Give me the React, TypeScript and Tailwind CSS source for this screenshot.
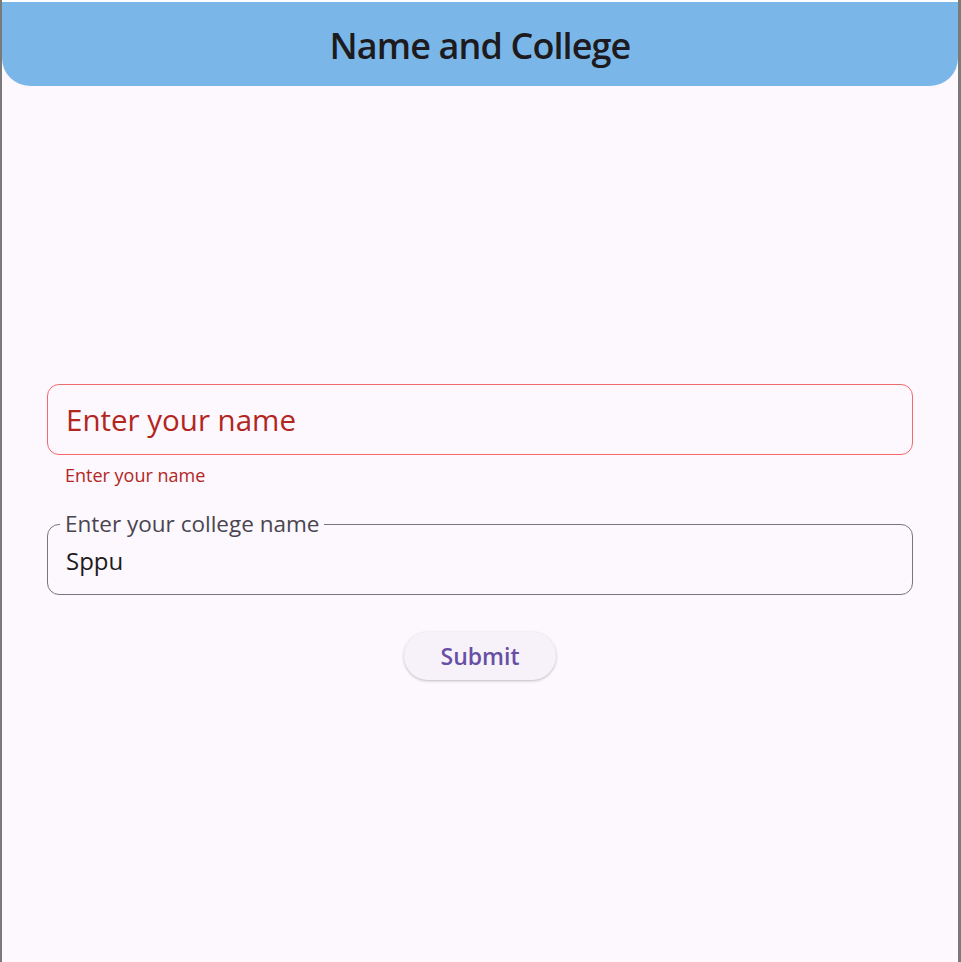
import React from "react";

const font = { fontFamily: '"Open Sans", "Noto Sans", sans-serif' };

export default function App() {
  return (
    <div
      className="w-[961px] h-[962px] bg-white pt-[2px] border-l-2 border-r-[3px] border-[#7a7a7a] overflow-hidden"
      style={font}
    >
      <div className="h-full flex flex-col bg-[#fdf7fe]">
        {/* App bar */}
        <header className="h-[84px] shrink-0 bg-[#7ab7e8] rounded-b-[28px] flex items-center justify-center pt-[3px]">
          <h1 className="text-[36px] leading-[44px] text-[#1d1b20] font-semibold tracking-tight">
            Name and College
          </h1>
        </header>

        {/* Form */}
        <div className="flex flex-col px-[45px] pt-[298px]">
          <div className="h-[71px] rounded-[12px] border border-[#f06a6a] flex items-center px-[18px]">
            <span className="text-[29.5px] leading-[36px] text-[#b3261e]">Enter your name</span>
          </div>
          <p className="px-[18px] mt-[8px] text-[18px] leading-[24px] text-[#b3261e]">
            Enter your name
          </p>

          <fieldset className="mt-[26px] h-[82px] rounded-[12px] border border-[#79747e] px-[12px]">
            <legend className="px-[5px] text-[22.5px] leading-[22px] text-[#49454f]">
              Enter your college name
            </legend>
            <div className="px-[6px] mt-[10px] text-[24px] leading-[32px] text-[#1d1b20]">Sppu</div>
          </fieldset>

          <div className="flex justify-center mt-[37px]">
            <button className="h-[48px] px-[36px] rounded-full bg-[#f7f2fa] text-[#6750a4] text-[23px] font-semibold shadow-[0_1px_3px_rgba(0,0,0,0.25)]">
              Submit
            </button>
          </div>
        </div>
      </div>
    </div>
  );
}
